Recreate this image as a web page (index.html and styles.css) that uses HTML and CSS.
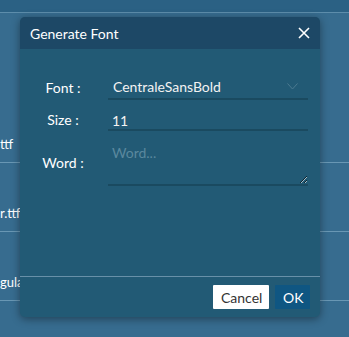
FILE: index.html
```html
<!DOCTYPE html>
<html lang="en">
<head>
    <meta charset="UTF-8">
    <meta name="viewport" content="width=device-width, initial-scale=1.0">
    <title>Generate Font</title>
    <link rel="stylesheet" href="styles.css">
</head>
<body>
    <!-- Liste des fichiers en fond -->
    <div class="page">
        <div class="grid-head"></div>
        <div class="grid-row row-tall">
            <span class="name">ttf</span>
        </div>
        <div class="grid-row">
            <span class="name">r.ttf</span>
        </div>
        <div class="grid-row">
            <span class="name">gula</span>
        </div>
    </div>

    <!-- Fenetre de dialogue -->
    <div class="dialog">
        <div class="dialog-header">
            <span class="dialog-title">Generate Font</span>
            <svg class="close" width="12" height="12" viewBox="0 0 12 12">
                <path d="M1 1 L11 11 M11 1 L1 11" stroke="#fff" stroke-width="1.6" fill="none"/>
            </svg>
        </div>
        <div class="dialog-body">
            <div class="form">
                <label class="label">Font :</label>
                <div class="field select">
                    <span>CentraleSansBold</span>
                    <svg width="11" height="7" viewBox="0 0 11 7">
                        <path d="M0.5 0.5 L5.5 6 L10.5 0.5" stroke="#4c7a91" stroke-width="1" fill="none"/>
                    </svg>
                </div>
                <label class="label">Size :</label>
                <input class="field input" type="text" value="11">
                <label class="label">Word :</label>
                <textarea class="field textarea" placeholder="Word..."></textarea>
            </div>
        </div>
        <div class="dialog-footer">
            <button class="btn btn-cancel">Cancel</button>
            <button class="btn btn-ok">OK</button>
        </div>
    </div>
</body>
</html>
```

FILE: styles.css
```css
body {
    margin: 0;
    font-family: Lato, "Open Sans", sans-serif;
    font-size: 14px;
    background-color: #376c8f;
    overflow: hidden;
}
.page {
    height: 337px;
    color: #fff;
}
.grid-head {
    height: 12px;
    background-color: #2b6184;
    border-bottom: 1px solid #5d8dab;
}
.grid-row {
    height: 69px;
    border-bottom: 1px solid #6997b4;
    display: flex;
    align-items: flex-end;
    padding-bottom: 8px;
    box-sizing: border-box;
}
.row-tall {
    height: 150px;
}
.name {
    font-size: 13px;
    white-space: nowrap;
    line-height: 20px;
}

/* Dialogue */
.dialog {
    position: absolute;
    left: 20px;
    top: 17px;
    width: 300px;
    height: 300px;
    background-color: #225a75;
    border-radius: 5px;
    box-shadow: 0 2px 8px rgba(0, 0, 0, 0.4);
    display: flex;
    flex-direction: column;
    overflow: hidden;
}
.dialog-header {
    height: 32px;
    flex-shrink: 0;
    background-color: #1d4866;
    display: flex;
    align-items: center;
    justify-content: space-between;
    padding: 0 10px;
    color: #fff;
}
.dialog-title {
    font-size: 14px;
}
.dialog-body {
    flex: 1;
    padding: 25px 12px 0 8px;
}
.form {
    display: grid;
    grid-template-columns: 70px 200px;
    column-gap: 10px;
    row-gap: 8px;
    align-items: center;
}
.label {
    text-align: center;
    color: #fff;
}
.field {
    box-sizing: border-box;
    width: 200px;
    border: none;
    border-bottom: 2px solid #1a4a60;
    background: transparent;
    color: #f2f2f2;
    font-family: inherit;
    font-size: 14px;
    outline: none;
    margin: 0;
}
.select {
    height: 26px;
    display: flex;
    align-items: center;
    justify-content: space-between;
    padding: 0 10px 0 5px;
}
.input {
    height: 23px;
    padding: 3px 4px 0 4px;
}
.textarea {
    height: 47px;
    padding: 4px 4px;
    line-height: 20px;
    resize: vertical;
}
.textarea::placeholder {
    color: #5a889e;
}
.dialog-footer {
    border-top: 1px solid #6890a8;
    padding: 8px 10px;
    display: flex;
    justify-content: flex-end;
    gap: 6px;
}
.btn {
    height: 24px;
    border: none;
    border-radius: 1px;
    font-family: inherit;
    font-size: 14px;
    padding: 0 8px;
    cursor: pointer;
}
.btn-cancel {
    width: 56px;
    background-color: #fff;
    color: #333;
}
.btn-ok {
    width: 35px;
    background-color: #0f5682;
    color: #fff;
}
```
